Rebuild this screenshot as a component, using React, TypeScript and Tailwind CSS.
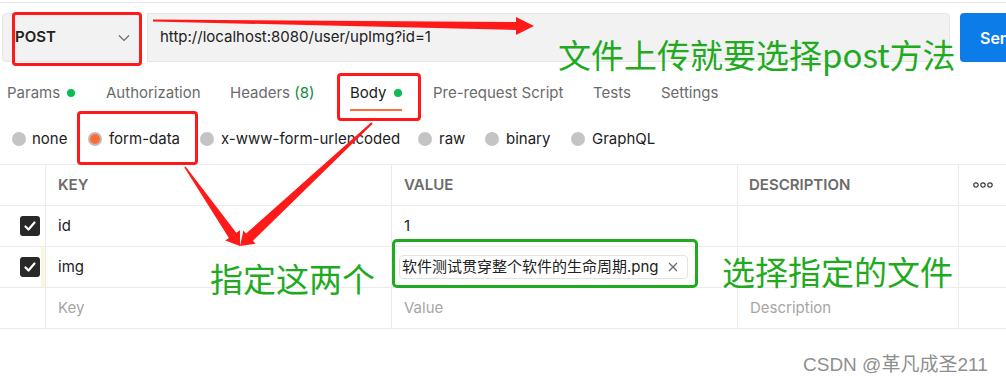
import React from "react";

function arrowPoints(ax: number, ay: number, tx: number, ty: number, w0: number, w1: number, L: number, H: number) {
  const dx = tx - ax;
  const dy = ty - ay;
  const len = Math.hypot(dx, dy);
  const ux = dx / len;
  const uy = dy / len;
  const px = -uy;
  const py = ux;
  const bx = tx - ux * L;
  const by = ty - uy * L;
  const pts: [number, number][] = [
    [ax + (px * w0) / 2, ay + (py * w0) / 2],
    [bx + (px * w1) / 2, by + (py * w1) / 2],
    [bx + px * H, by + py * H],
    [tx, ty],
    [bx - px * H, by - py * H],
    [bx - (px * w1) / 2, by - (py * w1) / 2],
    [ax - (px * w0) / 2, ay - (py * w0) / 2],
  ];
  return pts.map((p) => `${p[0].toFixed(1)},${p[1].toFixed(1)}`).join(" ");
}

function Check() {
  return (
    <div className="flex h-[20px] w-[20px] shrink-0 items-center justify-center rounded-[3px] bg-[#282828]">
      <svg width="14" height="14" viewBox="0 0 14 14">
        <polyline points="2.5,7.5 5.5,10.5 11.5,3.5" fill="none" stroke="#fff" strokeWidth="2.2" strokeLinecap="round" strokeLinejoin="round" />
      </svg>
    </div>
  );
}

function Radio({ on }: { on?: boolean }) {
  return on ? (
    <div className="flex h-[14px] w-[14px] shrink-0 items-center justify-center rounded-full bg-[#bdbdbd]">
      <div className="h-[10px] w-[10px] rounded-full bg-[#ff6c37]" />
    </div>
  ) : (
    <div className="h-[14px] w-[14px] shrink-0 rounded-full bg-[#c4c4c4]" />
  );
}

export default function App() {
  return (
    <div className="relative h-[385px] w-[1006px] overflow-hidden bg-white font-['Inter','Noto_Sans_CJK_SC',sans-serif] text-[15px] text-[#212121]">
      <div className="mt-[2px] border-t border-[#e8e8e8]" />

      {/* request bar */}
      <div className="mt-[10px] flex h-[49px] pl-[2px]">
        <div className="flex w-[139px] shrink-0 items-center justify-between rounded-l-[4px] border border-[#e6e6e6] bg-[#f2f2f2] pl-[12px] pr-[10px]">
          <span className="font-semibold text-[#212121]">POST</span>
          <svg width="12" height="8" viewBox="0 0 12 8">
            <polyline points="1,1.5 6,6.5 11,1.5" fill="none" stroke="#6b6b6b" strokeWidth="1.2" />
          </svg>
        </div>
        <div className="ml-[6px] flex w-[803px] shrink-0 items-center rounded-r-[4px] border border-[#e6e6e6] bg-[#f2f2f2] pl-[12px] text-[#212121]">
          http://localhost:8080/user/upImg?id=1
        </div>
        <div className="ml-[10px] flex w-[80px] shrink-0 items-center rounded-[4px] bg-[#0b7ce8] pl-[20px] text-[16px] font-semibold text-white">
          Send
        </div>
      </div>

      {/* tabs */}
      <div className="mt-[16px] flex h-[34px] pl-[7px] text-[#6b6b6b]">
        <div className="flex w-[99px] shrink-0 items-center gap-[7px] pb-[4px]">
          Params <span className="h-[8px] w-[8px] rounded-full bg-[#0cbb52]" />
        </div>
        <div className="flex w-[124px] shrink-0 items-center pb-[4px]">Authorization</div>
        <div className="flex w-[120px] shrink-0 items-center pb-[4px]">
          Headers&nbsp;<span className="text-[#0e8a44]">(8)</span>
        </div>
        <div className="relative flex w-[83px] shrink-0 items-center gap-[7px] pb-[4px] text-[#212121]">
          Body <span className="h-[8px] w-[8px] rounded-full bg-[#0cbb52]" />
          <div className="absolute bottom-[1px] left-0 h-[2px] w-[52px] bg-[#ff6c37]" />
        </div>
        <div className="flex w-[160px] shrink-0 items-center pb-[4px]">Pre-request Script</div>
        <div className="flex w-[68px] shrink-0 items-center pb-[4px]">Tests</div>
        <div className="flex shrink-0 items-center pb-[4px]">Settings</div>
      </div>

      {/* radios */}
      <div className="mt-[14px] flex h-[26px] items-center pl-[12px] text-[#212121]">
        <div className="flex w-[76px] shrink-0 items-center gap-[6px]"><Radio />none</div>
        <div className="flex w-[112px] shrink-0 items-center gap-[7px]"><Radio on />form-data</div>
        <div className="flex w-[218px] shrink-0 items-center gap-[7px]"><Radio />x-www-form-urlencoded</div>
        <div className="flex w-[67px] shrink-0 items-center gap-[7px]"><Radio />raw</div>
        <div className="flex w-[86px] shrink-0 items-center gap-[7px]"><Radio />binary</div>
        <div className="flex shrink-0 items-center gap-[7px]"><Radio />GraphQL</div>
      </div>

      {/* table */}
      <div className="mt-[12px] grid grid-cols-[46px_346px_346px_221px_1fr] border-t border-[#ebebeb]">
        {/* header */}
        <div className="h-[41px] border-b border-r border-[#ebebeb]" />
        <div className="flex h-[41px] items-center border-b border-r border-[#ebebeb] pl-[12px] font-semibold text-[#6b6b6b]">KEY</div>
        <div className="flex h-[41px] items-center border-b border-r border-[#ebebeb] pl-[12px] font-semibold text-[#6b6b6b]">VALUE</div>
        <div className="flex h-[41px] items-center border-b border-r border-[#ebebeb] pl-[11px] font-semibold text-[#6b6b6b]">DESCRIPTION</div>
        <div className="flex h-[41px] items-center justify-center border-b border-[#ebebeb]">
          <svg width="20" height="6" viewBox="0 0 20 6">
            <circle cx="3" cy="3" r="2.2" fill="none" stroke="#3a3a3a" strokeWidth="1.2" />
            <circle cx="10" cy="3" r="2.2" fill="none" stroke="#3a3a3a" strokeWidth="1.2" />
            <circle cx="17" cy="3" r="2.2" fill="none" stroke="#3a3a3a" strokeWidth="1.2" />
          </svg>
        </div>

        {/* row 1 */}
        <div className="flex h-[41px] items-center border-b border-r border-[#ebebeb] pl-[20px]"><Check /></div>
        <div className="flex h-[41px] items-center border-b border-r border-[#ebebeb] pl-[12px]">id</div>
        <div className="flex h-[41px] items-center border-b border-r border-[#ebebeb] pl-[12px]">1</div>
        <div className="h-[41px] border-b border-r border-[#ebebeb]" />
        <div className="h-[41px] border-b border-[#ebebeb]" />

        {/* row 2 */}
        <div className="flex h-[41px] items-center border-b border-r border-[#ebebeb] pl-[20px]">
          <Check />
          <div className="ml-auto h-full w-[4px] bg-[#fdf6df]" />
        </div>
        <div className="flex h-[41px] items-center border-b border-r border-[#ebebeb] pl-[12px]">img</div>
        <div className="flex h-[41px] items-center border-b border-r border-[#ebebeb] pl-[7px]">
          <div className="flex h-[24px] w-[289px] items-center justify-between rounded-[4px] border border-[#e3e3e3] pl-[2px] pr-[9px] text-[15px] text-[#212121]">
            <span>软件测试贯穿整个软件的生命周期.png</span>
            <svg width="10" height="10" viewBox="0 0 10 10">
              <path d="M1 1L9 9M9 1L1 9" stroke="#6b6b6b" strokeWidth="1.3" />
            </svg>
          </div>
        </div>
        <div className="h-[41px] border-b border-r border-[#ebebeb]" />
        <div className="h-[41px] border-b border-[#ebebeb]" />

        {/* row 3 */}
        <div className="h-[41px] border-b border-r border-[#ebebeb]" />
        <div className="flex h-[41px] items-center border-b border-r border-[#ebebeb] pl-[12px] text-[#a6a6a6]">Key</div>
        <div className="flex h-[41px] items-center border-b border-r border-[#ebebeb] pl-[12px] text-[#a6a6a6]">Value</div>
        <div className="flex h-[41px] items-center border-b border-r border-[#ebebeb] pl-[12px] text-[#a6a6a6]">Description</div>
        <div className="h-[41px] border-b border-[#ebebeb]" />
      </div>

      {/* annotations */}
      <div className="pointer-events-none absolute left-[12px] top-[12px] h-[54px] w-[130px] rounded-[4px] border-[3px] border-[#ff1a1a]" />
      <div className="pointer-events-none absolute left-[337px] top-[73px] h-[48px] w-[84px] rounded-[4px] border-[3px] border-[#ff1a1a]" />
      <div className="pointer-events-none absolute left-[77px] top-[111px] h-[54px] w-[121px] rounded-[4px] border-[3px] border-[#ff1a1a]" />
      <div className="pointer-events-none absolute left-[392px] top-[239px] h-[49px] w-[306px] rounded-[5px] border-[3px] border-[#1faa1f]" />

      <svg className="pointer-events-none absolute left-0 top-0" width="1006" height="385">
        <polygon points="153,19.5 516,22 516,17 534,26 516,35 516,30 153,21.5" fill="#ff1a1a" />
        <polygon points={arrowPoints(185, 167, 240, 246, 1.5, 9, 13, 9)} fill="#ff1a1a" />
        <polygon points={arrowPoints(372, 123, 240, 246, 2, 10, 13, 9)} fill="#ff1a1a" />
      </svg>

      <div className="absolute left-[558px] top-[34px] whitespace-nowrap font-['Noto_Sans_CJK_SC',sans-serif] text-[33px] leading-[40px] text-[#1faa1f]">
        文件上传就要选择post方法
      </div>
      <div className="absolute left-[210px] top-[258px] whitespace-nowrap font-['Noto_Sans_CJK_SC',sans-serif] text-[33px] leading-[40px] text-[#1faa1f]">
        指定这两个
      </div>
      <div className="absolute left-[722px] top-[251px] whitespace-nowrap font-['Noto_Sans_CJK_SC',sans-serif] text-[33px] leading-[40px] text-[#1faa1f]">
        选择指定的文件
      </div>

      <div className="absolute left-[803px] top-[353px] whitespace-nowrap font-['Liberation_Sans','Noto_Sans_CJK_SC',sans-serif] text-[19px] leading-[24px] text-[#8f8f8f]">
        CSDN @革凡成圣211
      </div>
    </div>
  );
}
